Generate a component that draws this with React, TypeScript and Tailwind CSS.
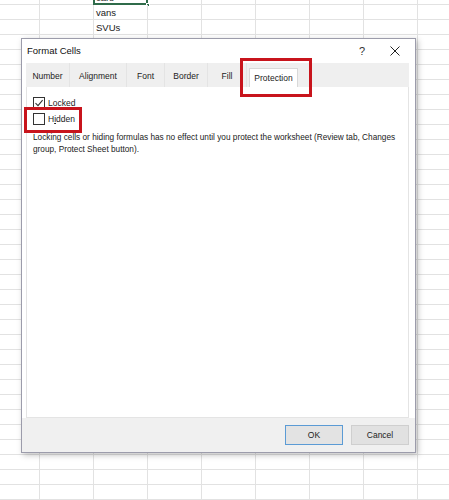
const FONT = { fontFamily: '"Liberation Sans", Arial, sans-serif' }

const COLS = [40, 54, 54, 54, 54, 54, 54, 54, 54]

function SheetRow({ label, selected }: { label?: string; selected?: boolean }) {
  return (
    <div className="flex h-[15px] border-b border-[#e2e2e2]">
      {COLS.map((w, i) => (
        <div
          key={i}
          style={{ width: w }}
          className="relative shrink-0 border-r border-[#e2e2e2] text-[9.5px] leading-[15px] text-[#1a1a1a] pl-[2px]"
        >
          {i === 2 && label}
          {i === 2 && selected && (
            <>
              <div className="absolute -left-[1px] -top-[1px] -right-[1px] -bottom-[1px] border-2 border-[#2f6b4a]" />
              <div className="absolute -right-[3px] -bottom-[3px] w-[4px] h-[4px] bg-[#2f6b4a] border border-white" />
            </>
          )}
        </div>
      ))}
    </div>
  )
}

function Checkbox({ checked }: { checked?: boolean }) {
  return (
    <div className="w-[12px] h-[12px] border border-[#333] bg-white flex items-center justify-center">
      {checked && (
        <svg width="10" height="10" viewBox="0 0 10 10">
          <path d="M1.5 5.2 L4 7.6 L8.6 2.2" fill="none" stroke="#333" strokeWidth="1.1" />
        </svg>
      )}
    </div>
  )
}

const TABS = [
  { name: "Number", w: 44 },
  { name: "Alignment", w: 57 },
  { name: "Font", w: 38 },
  { name: "Border", w: 43 },
  { name: "Fill", w: 39 },
]

export default function App() {
  const rows = Array.from({ length: 35 })

  return (
    <div className="relative w-[449px] h-[500px] overflow-hidden bg-white" style={FONT}>
      {/* spreadsheet background */}
      <div className="-mt-[10px]">
        {rows.map((_, i) => (
          <SheetRow
            key={i}
            label={i === 0 ? "cars" : i === 1 ? "vans" : i === 2 ? "SVUs" : undefined}
            selected={i === 0}
          />
        ))}
      </div>

      {/* dialog */}
      <div className="absolute left-[21px] top-[38px] w-[395px] h-[415px] flex flex-col border border-[#9c9cab] bg-[#f3f3f3] shadow-[2px_2px_6px_rgba(0,0,0,0.25)]">
        <div className="h-[24px] shrink-0 flex items-center bg-white pl-[5px] text-[9.5px] text-[#111]">
          <span className="flex-1">Format Cells</span>
          <span className="w-[14px] text-center text-[11px] text-[#333] mr-[21px]">?</span>
          <svg width="10" height="10" viewBox="0 0 10 10" className="mr-[15px]">
            <path d="M0.5 0.5 L9.5 9.5 M9.5 0.5 L0.5 9.5" stroke="#222" strokeWidth="1" />
          </svg>
        </div>

        <div className="flex-1 flex flex-col pl-[4px] pr-[6px] bg-white">
          {/* tab strip */}
          <div className="h-[24px] shrink-0 flex bg-[#efefef] text-[8.5px] text-[#222]">
            {TABS.map((t) => (
              <div
                key={t.name}
                style={{ width: t.w }}
                className="flex items-center justify-center pt-[2px] border-r border-[#e4e4e4]"
              >
                {t.name}
              </div>
            ))}
            <div className="ml-[2px] mt-[5px] w-[49px] h-[20px] flex items-center justify-center bg-white border border-b-0 border-[#d9d9d9]">
              Protection
            </div>
          </div>

          {/* panel */}
          <div className="flex-1 flex flex-col bg-white border border-t-0 border-[#e4e4e4] pl-[6px] pt-[9px] text-[8.5px] text-[#222]">
            <div className="flex items-center gap-[3px] h-[14px]">
              <Checkbox checked />
              <span>
                <span className="underline">L</span>ocked
              </span>
            </div>
            <div className="flex items-center gap-[3px] h-[14px] mt-[2px]">
              <Checkbox />
              <span>
                H<span className="underline">i</span>dden
              </span>
            </div>
            <p className="mt-[6px] w-[375px] text-[8.25px] leading-[12px]">
              Locking cells or hiding formulas has no effect until you protect the worksheet (Review tab, Changes
              group, Protect Sheet button).
            </p>
          </div>
        </div>

        {/* footer */}
        <div className="h-[34px] shrink-0 flex items-center justify-end gap-[8px] pr-[6px] bg-[#f0f0f0] text-[8.5px] text-[#222]">
          <button className="w-[58px] h-[20px] bg-[#e3e3e3] border border-[#5b9bd5]">OK</button>
          <button className="w-[58px] h-[20px] bg-[#e1e1e1] border border-[#cfcfcf]">Cancel</button>
        </div>
      </div>

      {/* annotation boxes */}
      <div className="absolute left-[240px] top-[58px] w-[72px] h-[39px] border-[3px] border-[#c8141c]" />
      <div className="absolute left-[24px] top-[107px] w-[58px] h-[26px] border-[3px] border-[#c8141c]" />
    </div>
  )
}
